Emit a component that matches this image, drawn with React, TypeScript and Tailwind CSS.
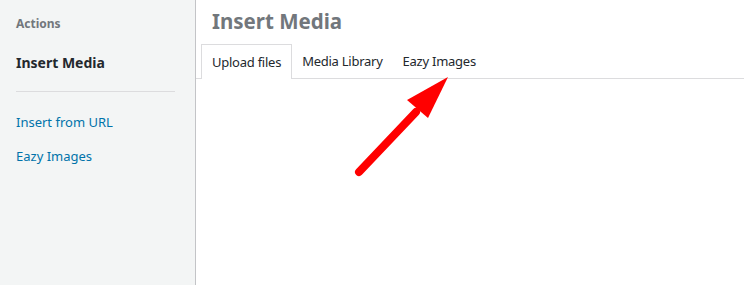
import React from 'react';

const tabs = ['Upload files', 'Media Library', 'Eazy Images'];

const Arrow: React.FC = () => (
  <svg className="pointer-events-none absolute left-0 top-0" width="744" height="285" viewBox="0 0 744 285">
    <line x1="359" y1="172" x2="416" y2="112" stroke="#ff0000" strokeWidth="8" strokeLinecap="round" />
    <polygon points="448,77 428,118 407,100" fill="#ff0000" />
  </svg>
);

export default function App() {
  return (
    <div className="relative flex h-[285px] w-[744px] overflow-hidden bg-white font-['Noto_Sans',sans-serif] text-[13px]">
      <aside className="w-[196px] shrink-0 border-r border-[#c3c4c7] bg-[#f3f5f5] px-4 pt-[15px]">
        <div className="text-[12px] font-bold leading-[18px] text-[#72777c]">Actions</div>
        <div className="mt-[20px] text-[14px] font-bold leading-[20px] text-[#23282d]">Insert Media</div>
        <div className="mt-[18px] mr-[4px] border-t border-[#dcdcde]" />
        <div className="mt-[20px] leading-[20px] text-[#0073aa]">Insert from URL</div>
        <div className="mt-[14px] leading-[20px] text-[#0073aa]">Eazy Images</div>
      </aside>
      <main className="flex-1">
        <h1 className="pl-4 pt-[6px] text-[20.5px] font-bold leading-[30px] text-[#72777c]">Insert Media</h1>
        <div className="mt-[8px] flex border-b border-[#dcdcde] pl-[5px] tracking-[-0.25px]">
          {tabs.map((t, i) => (
            <div
              key={t}
              className={
                i === 0
                  ? '-mb-px border border-b-0 border-[#dcdcde] bg-white px-[10px] pb-[8px] pt-[8px] leading-[18px] text-[#23282d]'
                  : 'px-[10px] pb-[8px] pt-[8px] leading-[18px] text-[#23282d]'
              }
            >
              {t}
            </div>
          ))}
        </div>
      </main>
      <Arrow />
    </div>
  );
}
